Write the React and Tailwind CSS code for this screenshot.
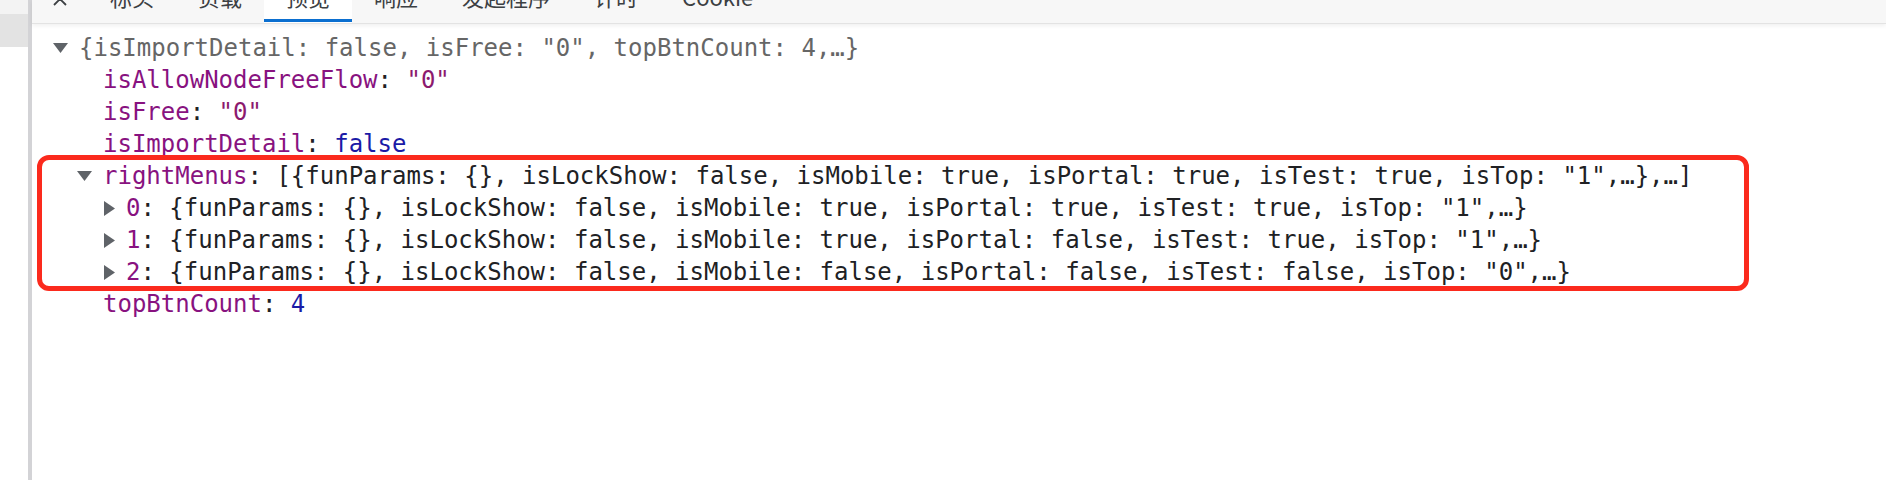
import React from "react";

const mono = "font-['DejaVu_Sans_Mono',monospace]";

function Down() {
  return (
    <svg width="15" height="10" viewBox="0 0 15 10" className="block">
      <polygon points="0,0 15,0 7.5,10" fill="#5f6368" />
    </svg>
  );
}

function Right() {
  return (
    <svg width="11" height="15" viewBox="0 0 11 15" className="block">
      <polygon points="0,0 11,7.5 0,15" fill="#5f6368" />
    </svg>
  );
}

const K = ({ children }) => <span className="text-[#881280]">{children}</span>;
const S = ({ children }) => <span className="text-[#8c1a6e]">{children}</span>;
const B = ({ children }) => <span className="text-[#1a1aa6]">{children}</span>;

export default function App() {
  const tabs = ["标头", "负载", "预览", "响应", "发起程序", "计时", "Cookie"];
  return (
    <div className="relative w-[1886px] h-[480px] overflow-hidden bg-white flex">
      {/* left request list strip */}
      <div className="w-[28px] shrink-0 flex flex-col">
        <div className="h-[14px] bg-[#f3f3f3]" />
        <div className="h-[33px] bg-[#e3e3e3]" />
        <div className="flex-1 bg-white" />
      </div>
      <div className="w-[4px] shrink-0 bg-[#d3d3d6]" />

      {/* main panel */}
      <div className="flex-1 flex flex-col min-w-0">
        {/* tab bar */}
        <div className="h-[24px] bg-[#f7f7f7] border-b border-[#e3e3e3] shadow-[0_2px_4px_rgba(0,0,0,0.06)] flex items-stretch overflow-hidden font-['Noto_Sans_CJK_SC','Noto_Sans',sans-serif] text-[22px] text-[#3c4043]">
          <div className="w-[56px] flex justify-center">
            <svg width="18" height="18" viewBox="0 0 18 18" className="mt-[-10px]">
              <path d="M3 3 L15 15 M15 3 L3 15" stroke="#3c4043" strokeWidth="1.8" fill="none" />
            </svg>
          </div>
          {tabs.map((t) => (
            <div
              key={t}
              className={
                "relative px-[22px] " +
                (t === "预览" ? "bg-white" : "")
              }
            >
              <div className="leading-[22px] mt-[-15px] whitespace-nowrap">{t}</div>
              {t === "预览" && (
                <div className="absolute left-0 right-0 top-[19px] h-[3px] bg-[#0b6fd0]" />
              )}
            </div>
          ))}
        </div>

        {/* preview tree */}
        <div className={"pt-[8px] text-[24px] leading-[32px] whitespace-pre text-[#202124] " + mono}>
          <div className="flex items-center h-[32px] pl-[9px]">
            <div className="w-[38px] flex justify-center"><Down /></div>
            <span className="text-[#666666]">{'{isImportDetail: false, isFree: "0", topBtnCount: 4,…}'}</span>
          </div>
          <div className="flex items-center h-[32px] pl-[71px]">
            <K>isAllowNodeFreeFlow</K>: <S>"0"</S>
          </div>
          <div className="flex items-center h-[32px] pl-[71px]">
            <K>isFree</K>: <S>"0"</S>
          </div>
          <div className="flex items-center h-[32px] pl-[71px]">
            <K>isImportDetail</K>: <B>false</B>
          </div>
          <div className="flex items-center h-[32px] pl-[33px]">
            <div className="w-[38px] flex justify-center"><Down /></div>
            <span>
              <K>rightMenus</K>
              {': [{funParams: {}, isLockShow: false, isMobile: true, isPortal: true, isTest: true, isTop: "1",…},…]'}
            </span>
          </div>
          <div className="flex items-center h-[32px] pl-[56px]">
            <div className="w-[38px] flex justify-center pl-[4px]"><Right /></div>
            <span>
              <K>0</K>
              {': {funParams: {}, isLockShow: false, isMobile: true, isPortal: true, isTest: true, isTop: "1",…}'}
            </span>
          </div>
          <div className="flex items-center h-[32px] pl-[56px]">
            <div className="w-[38px] flex justify-center pl-[4px]"><Right /></div>
            <span>
              <K>1</K>
              {': {funParams: {}, isLockShow: false, isMobile: true, isPortal: false, isTest: true, isTop: "1",…}'}
            </span>
          </div>
          <div className="flex items-center h-[32px] pl-[56px]">
            <div className="w-[38px] flex justify-center pl-[4px]"><Right /></div>
            <span>
              <K>2</K>
              {': {funParams: {}, isLockShow: false, isMobile: false, isPortal: false, isTest: false, isTop: "0",…}'}
            </span>
          </div>
          <div className="flex items-center h-[32px] pl-[71px]">
            <K>topBtnCount</K>: <B>4</B>
          </div>
        </div>
      </div>

      {/* red annotation box */}
      <div className="absolute left-[37px] top-[155px] w-[1712px] h-[136px] border-[5px] border-[#fb2a1d] rounded-[12px] pointer-events-none" />
    </div>
  );
}
